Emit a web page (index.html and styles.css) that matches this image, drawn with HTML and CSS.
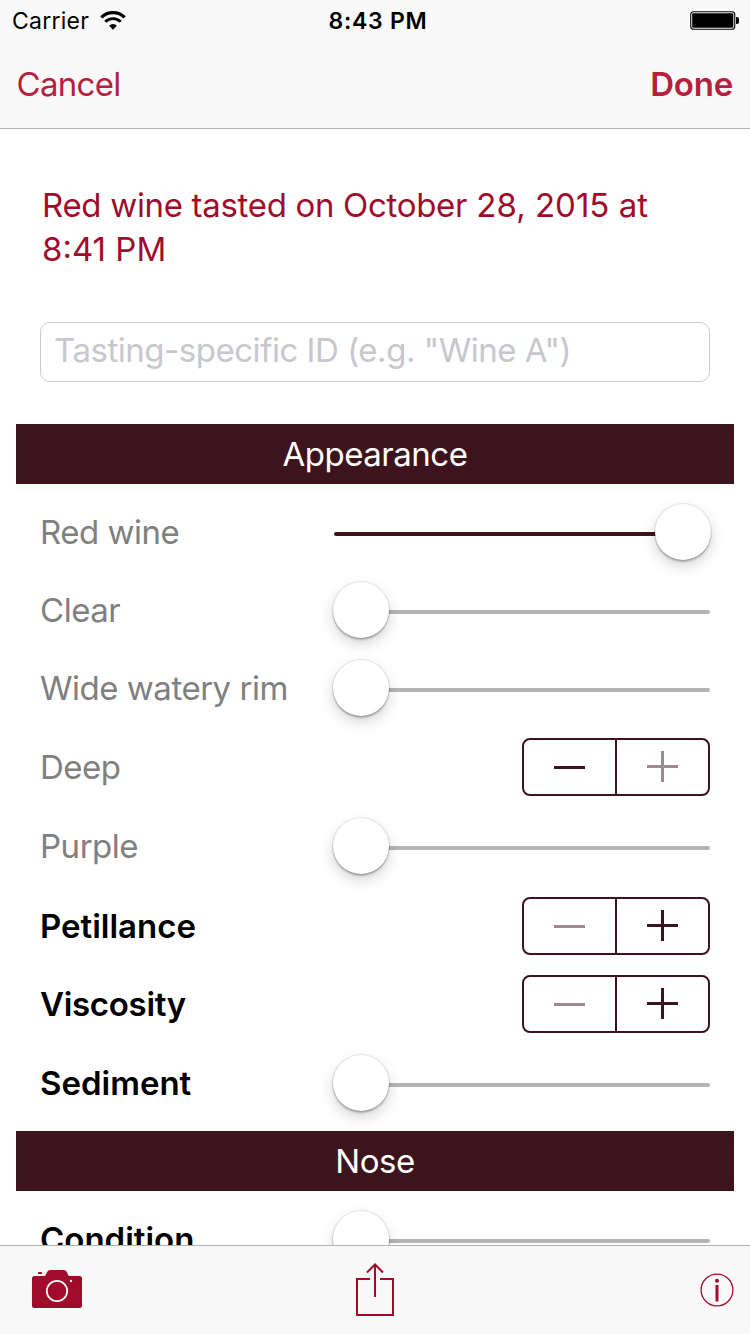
FILE: index.html
```html
<!DOCTYPE html>
<html lang="en">
<head>
<meta charset="utf-8">
<title>Red wine tasting</title>
<link rel="stylesheet" href="styles.css">
</head>
<body>
<div class="screen">
  <header class="top">
    <div class="status">
      <div class="status-side">
        <span class="carrier">Carrier</span>
        <svg class="wifi" width="26" height="20" viewBox="0 0 26 20">
          <path d="M1.300 6.400a16.600 16.600 0 0 1 23.400 0" fill="none" stroke="#000" stroke-width="3.100"/>
          <path d="M5.300 10.800a11 11 0 0 1 15.400 0" fill="none" stroke="#000" stroke-width="2.900"/>
          <path d="M9.100 14.700a5.600 5.600 0 0 1 7.800 0L13 18.700z"/>
        </svg>
      </div>
      <span class="clock">8:43 PM</span>
      <div class="status-side status-right">
        <svg width="50" height="20" viewBox="0 0 50 20">
          <rect x=".75" y=".75" width="44" height="17.500" rx="2.800" fill="none" stroke="#000" stroke-width="1.100"/>
          <rect x="2.200" y="2.200" width="41.100" height="14.600" rx="1"/>
          <path d="M46 6h1a2 2 0 0 1 2 2v3a2 2 0 0 1-2 2h-1z"/>
        </svg>
      </div>
    </div>
    <nav class="nav">
      <span class="cancel">Cancel</span>
      <span class="done">Done</span>
    </nav>
  </header>

  <main class="content">
    <h1 class="title"><span class="words">Red wine tasted on October</span> 28, 2015 at<br>8:41 PM</h1>
    <input class="field" type="text" placeholder='Tasting-specific ID (e.g. "Wine A")'>

    <h2 class="section">Appearance</h2>
    <div class="rows">
      <div class="row"><span>Red wine</span><div class="slider full"><i class="knob"></i></div></div>
      <div class="row"><span>Clear</span><div class="slider"><i class="knob"></i></div></div>
      <div class="row"><span>Wide watery rim</span><div class="slider"><i class="knob"></i></div></div>
      <div class="row"><span>Deep</span>
        <div class="stepper"><span class="half"><i class="minus"></i></span><span class="half off"><i class="plus"></i></span></div></div>
      <div class="row"><span>Purple</span><div class="slider"><i class="knob"></i></div></div>
      <div class="row strong"><span>Petillance</span>
        <div class="stepper"><span class="half off"><i class="minus"></i></span><span class="half"><i class="plus"></i></span></div></div>
      <div class="row strong"><span class="viscosity">Viscosity</span>
        <div class="stepper"><span class="half off"><i class="minus"></i></span><span class="half"><i class="plus"></i></span></div></div>
      <div class="row strong"><span>Sediment</span><div class="slider"><i class="knob"></i></div></div>
    </div>

    <h2 class="section">Nose</h2>
    <div class="rows rows-nose">
      <div class="row strong"><span>Condition</span><div class="slider"><i class="knob"></i></div></div>
    </div>
  </main>

  <footer class="toolbar">
    <svg class="camera" width="50" height="38" viewBox="0 0 50 38">
      <path fill="#a00d2c" d="M2.500 6H12q1.300 0 1.800-1.200L15 2.200Q16 0 18.500 0h13q2.500 0 3.500 2.200l1 2.600Q36.500 6 38 6h9.500Q50 6 50 8.500v27q0 2.500-2.500 2.500h-45Q0 38 0 35.500v-27Q0 6 2.500 6zM6 4V2.800q0-.8.8-.8h2.400q.8 0 .8.800V4z"/>
      <circle cx="25" cy="21" r="10.200" fill="none" stroke="#f9f9f9" stroke-width="1.800"/>
      <circle cx="39" cy="11" r="1.200" fill="#f9f9f9"/>
    </svg>
    <svg class="share" width="38" height="54" viewBox="0 0 38 54" fill="none" stroke="#a00d2c" stroke-width="2">
      <path d="M14 16H1v36h36V16H24M19 34V2M11 9.500l8-8 8 8"/>
    </svg>
    <svg class="info" width="34" height="34" viewBox="0 0 34 34">
      <circle cx="17" cy="17" r="15.900" fill="none" stroke="#a00d2c" stroke-width="1.300"/>
      <circle cx="17" cy="7.700" r="2" fill="#a00d2c"/>
      <path d="M17 12v16.500" stroke="#a00d2c" stroke-width="3"/>
    </svg>
  </footer>
</div>
</body>
</html>
```
FILE: styles.css
```css
* { box-sizing: border-box; }
body { margin: 0; font-family: Inter, "Liberation Sans", sans-serif; font-size: 33px; background: #fff; }
.screen { width: 750px; height: 1334px; overflow: hidden; display: flex; flex-direction: column; }
svg { display: block; flex: none; }

.top { height: 129px; flex: none; background: #f9f9f9; border-bottom: 1px solid #b2b2b2; }
.status { height: 42px; display: flex; align-items: center; justify-content: space-between; padding: 0 10px 0 12px; font-size: 23px; }
.status-side { width: 200px; display: flex; align-items: center; gap: 11px; }
.status-right { justify-content: flex-end; }
.carrier { letter-spacing: .25px; }
.clock { font-weight: 600; letter-spacing: .75px; padding-left: 4px; }
.wifi { margin-top: 0; }
.nav { height: 84px; display: flex; align-items: center; justify-content: space-between; padding: 0 17px 0 16.500px; color: #b5203f; }
.cancel { letter-spacing: -.7px; }
.done { font-weight: 600; letter-spacing: -.2px; }

.content { flex: 1; min-height: 0; overflow: hidden; padding: 54px 16px 0; }
.title { margin: 0 0 51px; padding: 0 26px; font-size: 33px; font-weight: 400; line-height: 44px; letter-spacing: 0; color: #a00d2c; white-space: nowrap; }
.words { letter-spacing: -.32px; }
.field { display: block; width: 670px; height: 60px; margin: 0 24px 42px; padding: 0 13px 5px; border: 1px solid #ccc; border-radius: 10px; font: inherit; letter-spacing: -.47px; background: #fff; }
.field::placeholder { color: #c7c7cd; opacity: 1; }
.section { height: 60px; margin: 0; display: flex; align-items: center; justify-content: center; background: #3d141d; color: #fff; font-size: 33px; font-weight: 400; letter-spacing: -.5px; }
.rows { display: grid; grid-template-rows: 78px 78px 78px 80px 78px 82px 74px 84px; padding: 9px 24px 6px; }
.rows-nose { grid-template-rows: 78px; }
.row { display: flex; align-items: center; justify-content: space-between; color: #808080; white-space: nowrap; letter-spacing: -.48px; }
.strong { color: #000; font-weight: 600; letter-spacing: 0; }
.viscosity { letter-spacing: -.3px; }

.slider { width: 376px; height: 56px; display: flex; align-items: center; flex: none; position: relative; }
.slider::before { content: ""; position: absolute; left: 0; right: 0; top: 28px; height: 4px; border-radius: 2px; background: #b5b5b5; }
.full::before { background: #3d141d; }
.knob { position: relative; width: 56px; height: 56px; margin-left: -1px; flex: none; border-radius: 50%; background: #fff; box-shadow: 0 0 0 1px rgba(0,0,0,.08), 0 2px 2px rgba(0,0,0,.24), 0 6px 14px rgba(0,0,0,.17); }
.full { justify-content: flex-end; }
.full .knob { margin: 0 -1px 0 0; }

.stepper { width: 188px; height: 58px; display: flex; border: 2px solid #3d141d; border-radius: 8px; color: #3d141d; }
.half { flex: 1; display: flex; align-items: center; justify-content: center; }
.half + .half { border-left: 2px solid #3d141d; }
.off { color: #9e8a8e; }
.minus { width: 31px; height: 3px; background: currentColor; margin-top: 1px; }
.plus { width: 31px; height: 31px; margin-top: -1px; background: linear-gradient(currentColor, currentColor) 0 14px / 31px 3px no-repeat, linear-gradient(currentColor, currentColor) 14px 0 / 3px 31px no-repeat; }

.toolbar { height: 89px; flex: none; display: grid; grid-template-columns: 1fr 38px 1fr; align-items: center; padding: 0 16px; background: #f9f9f9; border-top: 1px solid #b2b2b2; }
.camera { margin: -2px 0 0 16px; }
.info { justify-self: end; }
```
